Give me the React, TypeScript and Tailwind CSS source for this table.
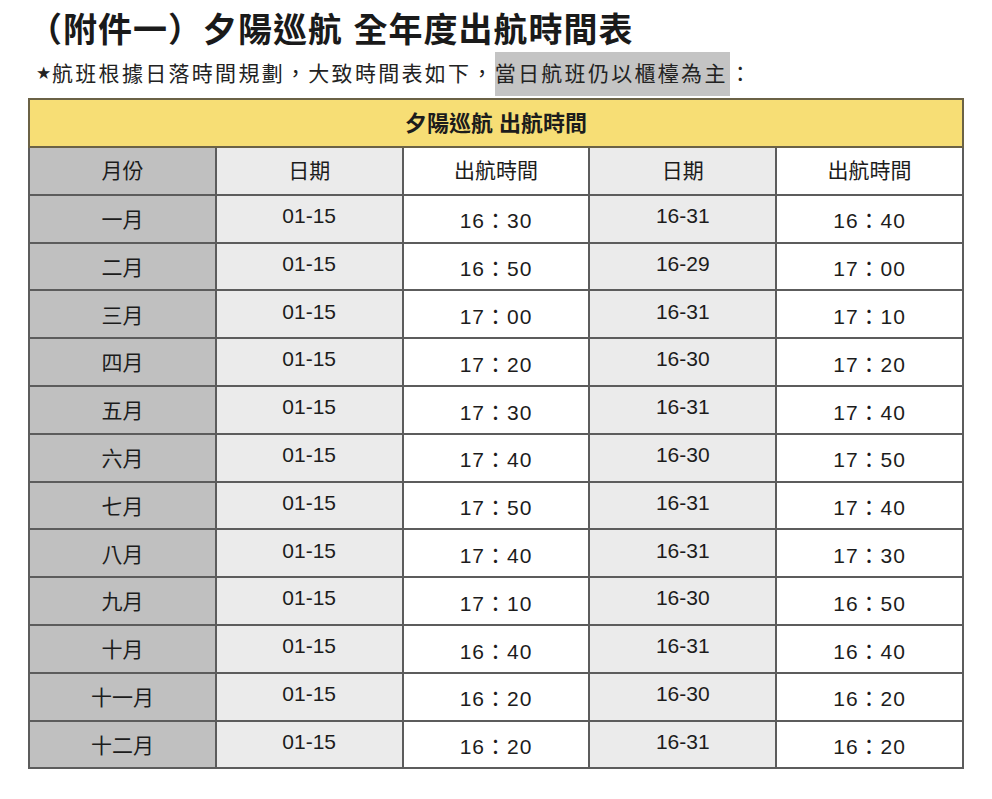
const rows = [
  ["一月", "01-15", "16：30", "16-31", "16：40"],
  ["二月", "01-15", "16：50", "16-29", "17：00"],
  ["三月", "01-15", "17：00", "16-31", "17：10"],
  ["四月", "01-15", "17：20", "16-30", "17：20"],
  ["五月", "01-15", "17：30", "16-31", "17：40"],
  ["六月", "01-15", "17：40", "16-30", "17：50"],
  ["七月", "01-15", "17：50", "16-31", "17：40"],
  ["八月", "01-15", "17：40", "16-31", "17：30"],
  ["九月", "01-15", "17：10", "16-30", "16：50"],
  ["十月", "01-15", "16：40", "16-31", "16：40"],
  ["十一月", "01-15", "16：20", "16-30", "16：20"],
  ["十二月", "01-15", "16：20", "16-31", "16：20"],
];

const font = { fontFamily: '"Liberation Sans", "Noto Sans CJK TC", sans-serif' };

export default function App() {
  return (
    <div className="w-[992px] h-[799px] bg-white px-[28px] pt-[8px] text-[#1a1a1a]" style={font}>
      <h1 className="h-[44px] leading-[44px] text-[34px] font-bold tracking-[1px]">
        （附件一）夕陽巡航 全年度出航時間表
      </h1>
      <p className="h-[44px] flex items-center pl-[5px] text-[21px] tracking-[2.3px] text-[#222]">
        <span
          className="w-[19px] text-[34px] leading-none tracking-normal pb-[4px]"
          style={{ fontFamily: '"DejaVu Sans", sans-serif' }}
        >
          ⋆
        </span>
        <span>航班根據日落時間規劃，大致時間表如下，</span>
        <span className="h-full flex items-center bg-[#c4c4c4] pr-[2px]">當日航班仍以櫃檯為主</span>
        <span>：</span>
      </p>

      <table className="mt-[2px] w-[936px] border-collapse table-fixed text-[21px] text-[#1c1c1c]">
        <thead>
          <tr className="h-[48px]">
            <th colSpan={5} className="border-2 border-[#6b6246] bg-[#f7de75] font-bold text-[22px]">
              夕陽巡航 出航時間
            </th>
          </tr>
          <tr className="h-[47.8px]">
            <th className="w-1/5 border-2 border-[#5c5c5c] bg-[#c0c0c0] font-normal">月份</th>
            <th className="w-1/5 border-2 border-[#5c5c5c] bg-[#ebebeb] font-normal">日期</th>
            <th className="w-1/5 border-2 border-[#5c5c5c] bg-white font-normal">出航時間</th>
            <th className="w-1/5 border-2 border-[#5c5c5c] bg-[#ebebeb] font-normal">日期</th>
            <th className="w-1/5 border-2 border-[#5c5c5c] bg-white font-normal">出航時間</th>
          </tr>
        </thead>
        <tbody>
          {rows.map((r) => (
            <tr key={r[0]} className="h-[47.8px]">
              <td className="border-2 border-[#5c5c5c] bg-[#c0c0c0] text-center pt-[2px]">{r[0]}</td>
              <td className="border-2 border-[#5c5c5c] bg-[#ebebeb] text-center pb-[6px]">{r[1]}</td>
              <td className="border-2 border-[#5c5c5c] bg-white text-center pt-[5px] tracking-[1px]">{r[2]}</td>
              <td className="border-2 border-[#5c5c5c] bg-[#ebebeb] text-center pb-[6px]">{r[3]}</td>
              <td className="border-2 border-[#5c5c5c] bg-white text-center pt-[5px] tracking-[1px]">{r[4]}</td>
            </tr>
          ))}
        </tbody>
      </table>
    </div>
  );
}
